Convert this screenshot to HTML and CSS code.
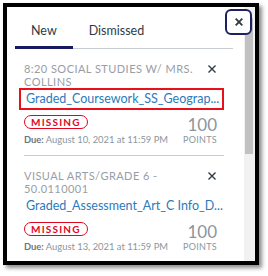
FILE: index.html
```html
<!DOCTYPE html>
<html>
<head>
<meta charset="utf-8">
<link rel="stylesheet" href="styles.css">
</head>
<body>
<div class="frame">
  <div class="pane">
    <div class="content">
      <div class="tabs">
        <div class="tab active">New</div>
        <div class="tab">Dismissed</div>
      </div>
      <div class="item">
        <div class="head">
          <div class="course">8:20 SOCIAL STUDIES W/ MRS. COLLINS</div>
          <svg class="dismiss" width="8" height="8" viewBox="0 0 8 8"><path d="M0.5 0.5L7.5 7.5M7.5 0.5L0.5 7.5" stroke="#2d3b45" stroke-width="1.4" fill="none"/></svg>
        </div>
        <a class="link focused">Graded_Coursework_SS_Geograp...</a>
        <div class="meta">
          <div class="left">
            <span class="pill">MISSING</span>
            <div class="due"><b>Due:</b> August 10, 2021 at 11:59 PM</div>
          </div>
          <div class="points"><div class="num">100</div><div class="lbl">POINTS</div></div>
        </div>
      </div>
      <div class="item">
        <div class="head">
          <div class="course">VISUAL ARTS/GRADE 6 - 50.0110001</div>
          <svg class="dismiss" width="8" height="8" viewBox="0 0 8 8"><path d="M0.5 0.5L7.5 7.5M7.5 0.5L0.5 7.5" stroke="#2d3b45" stroke-width="1.4" fill="none"/></svg>
        </div>
        <a class="link">Graded_Assessment_Art_C Info_D...</a>
        <div class="meta">
          <div class="left">
            <span class="pill">MISSING</span>
            <div class="due"><b>Due:</b> August 13, 2021 at 11:59 PM</div>
          </div>
          <div class="points"><div class="num">100</div><div class="lbl">POINTS</div></div>
        </div>
      </div>
    </div>
    <div class="scrollbar">
      <div class="arrow"></div>
      <div class="thumb"></div>
    </div>
  </div>
  <button class="close"><svg width="8" height="8" viewBox="0 0 8 8"><path d="M0.7 0.7L7.3 7.3M7.3 0.7L0.7 7.3" stroke="#2d3b45" stroke-width="1.8" fill="none"/></svg></button>
</div>
</body>
</html>
```
FILE: styles.css
```css
html, body {
  margin: 0;
  padding: 0;
  background: #ffffff;
}
body {
  font-family: Lato, "Liberation Sans", sans-serif;
  width: 268px;
  height: 276px;
  overflow: hidden;
}
.frame {
  position: relative;
  margin: 3px 0 0 3px;
  width: 248px;
  height: 254px;
  border: 4px solid #000;
  box-shadow: 3px 3px 4px rgba(0,0,0,0.45);
  background: #fff;
}
.pane {
  display: flex;
  height: 100%;
}
.content {
  flex: 1;
  overflow: hidden;
}
.tabs {
  display: flex;
  margin: 0 11px 0 8px;
  border-bottom: 1px solid #c7cdd1;
}
.tab {
  position: relative;
  padding: 16px 16px 9px;
  font-size: 12.5px;
  line-height: 16px;
  color: #2d3b45;
}
.tab.active::after {
  content: "";
  position: absolute;
  left: 0;
  right: 0;
  bottom: -1px;
  height: 3px;
  background: #171a5c;
}
.item {
  margin: 0 20px 0 17px;
  padding: 13px 0 8px;
  border-bottom: 1px solid #c7cdd1;
}
.head {
  display: flex;
  align-items: flex-start;
}
.course {
  flex: 1;
  font-size: 11px;
  line-height: 13px;
  letter-spacing: 0.45px;
  color: #979ea5;
}
.dismiss {
  margin: 3px 8px 0 6px;
  flex: none;
}
.link {
  display: block;
  box-sizing: border-box;
  width: calc(100% + 5px);
  margin-left: -5px;
  padding: 0 3px 0 5px;
  border: 2px solid transparent;
  font-size: 12.5px;
  line-height: 18px;
  color: #2b7abc;
  white-space: nowrap;
}
.link.focused {
  border-color: #e8101a;
}
.meta {
  display: flex;
  justify-content: space-between;
  margin-top: 5px;
}
.left {
  display: flex;
  flex-direction: column;
  align-items: flex-start;
}
.pill {
  display: inline-block;
  padding: 0 6px;
  border: 1px solid #e0061f;
  border-radius: 8px;
  font-size: 10px;
  line-height: 12px;
  font-weight: 700;
  letter-spacing: 1.2px;
  color: #e0061f;
}
.due {
  margin-top: 4px;
  font-size: 9.4px;
  line-height: 14px;
  color: #8b969e;
  white-space: nowrap;
}
.due b {
  color: #6b7780;
}
.points {
  margin-right: 7px;
  padding-top: 1px;
  text-align: right;
  color: #8b969e;
}
.num {
  font-size: 17px;
  line-height: 18px;
}
.lbl {
  font-size: 9px;
  line-height: 12px;
  letter-spacing: 0.3px;
}
.scrollbar {
  width: 11px;
  background: #f1f1f1;
  display: flex;
  flex-direction: column;
}
.arrow {
  height: 11px;
}
.thumb {
  height: 136px;
  margin: 0 2px 0 1px;
  background: #c1c1c1;
}
.close {
  position: absolute;
  top: 2px;
  left: 218px;
  width: 27px;
  height: 26px;
  padding: 0;
  border: 2px solid #1c2260;
  border-radius: 6px;
  background: #fff;
  display: flex;
  align-items: center;
  justify-content: center;
}
.close svg {
  display: block;
}
```
